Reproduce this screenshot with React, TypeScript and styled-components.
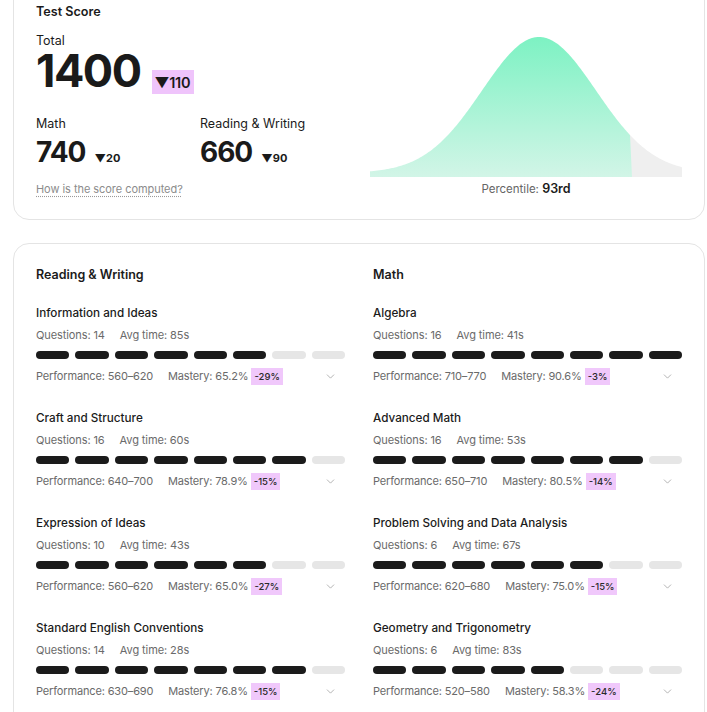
import React from "react";
import styled, { createGlobalStyle } from "styled-components";
import { ChevronDown } from "lucide-react";

const Global = createGlobalStyle`
  html, body { margin: 0; padding: 0; background: #ffffff; }
  body { font-family: Inter, "Noto Sans", Arial, sans-serif; color: #1b1b1b; overflow: hidden; }
  * { box-sizing: border-box; }
`;

const Page = styled.div`
  width: 707px;
  padding: 0 2px 0 13px;
  display: flex;
  flex-direction: column;
  gap: 23px;
`;

const Card = styled.section<{ $clipTop?: boolean }>`
  border: 1px solid #e4e4e4;
  border-radius: 16px;
  background: #fff;
  padding: 22px;
  margin-top: ${(p) => (p.$clipTop ? "-19px" : "0")};
`;

const CardTitle = styled.h2`
  margin: 0;
  font-size: 12.6px;
  line-height: 16px;
  font-weight: 600;
  color: #1b1b1b;
`;

/* ---------- Test score summary ---------- */

const Summary = styled.div`
  display: grid;
  grid-template-columns: 334px 1fr;
`;

const ScoreColumn = styled.div`
  display: flex;
  flex-direction: column;
`;

const Label = styled.div<{ $top: number }>`
  font-size: 12.5px;
  line-height: 16px;
  color: #1b1b1b;
  margin-top: ${(p) => p.$top}px;
`;

const TotalRow = styled.div`
  display: flex;
  align-items: flex-end;
  gap: 11px;
`;

const TotalValue = styled.div`
  font-size: 45px;
  line-height: 44px;
  font-weight: 700;
  letter-spacing: -1.5px;
  color: #1a1a1a;
`;

const DeltaBadge = styled.span`
  display: inline-flex;
  align-items: center;
  height: 24px;
  padding: 0 4px 0 3px;
  margin-bottom: -1px;
  background: #efc4fb;
  font-size: 14.5px;
  font-weight: 600;
  letter-spacing: -0.3px;
  color: #1a1a1a;
`;

const SubScores = styled.div`
  display: grid;
  grid-template-columns: 164px 164px;
  margin-top: 23px;
`;

const SubScore = styled.div`
  display: flex;
  flex-direction: column;
`;

const SubRow = styled.div`
  display: flex;
  align-items: baseline;
  gap: 9px;
  margin-top: 3px;
`;

const SubValue = styled.div`
  font-size: 28px;
  line-height: 34px;
  font-weight: 700;
  letter-spacing: -1px;
  color: #1a1a1a;
`;

const SmallDelta = styled.span`
  font-size: 11px;
  font-weight: 700;
  color: #1a1a1a;
`;

const HelpLink = styled.a`
  margin-top: 13px;
  align-self: flex-start;
  font-size: 11px;
  line-height: 15px;
  letter-spacing: -0.05px;
  color: #8c8c8c;
  text-decoration: underline dotted #9a9a9a;
  text-underline-offset: 3px;
  cursor: help;
`;

const ChartColumn = styled.div`
  display: flex;
  flex-direction: column;
  align-items: center;
  padding-top: 17px;
`;

const ChartSvg = styled.svg`
  display: block;
`;

const Percentile = styled.div`
  margin-top: 4px;
  font-size: 11.5px;
  line-height: 16px;
  color: #666;
  b {
    font-size: 12.5px;
    font-weight: 600;
    color: #1a1a1a;
  }
`;

/* ---------- Domain breakdown ---------- */

const Domains = styled.div`
  display: grid;
  grid-template-columns: 1fr 1fr;
  column-gap: 28px;
  padding-top: 1px;
`;

const Column = styled.div`
  display: flex;
  flex-direction: column;
`;

const ColumnTitle = styled.h3`
  margin: 0 0 22px;
  font-size: 12.5px;
  line-height: 16px;
  font-weight: 600;
  color: #1b1b1b;
`;

const Skill = styled.div`
  display: flex;
  flex-direction: column;
  margin-bottom: 25px;
`;

const SkillName = styled.div`
  font-size: 11.7px;
  line-height: 16px;
  font-weight: 500;
  color: #1b1b1b;
`;

const Meta = styled.div`
  display: flex;
  gap: 15px;
  margin-top: 6px;
  font-size: 11px;
  line-height: 16px;
  letter-spacing: -0.1px;
  color: #6a6a6a;
`;

const Bars = styled.div`
  display: flex;
  gap: 6px;
  margin-top: 8px;
`;

const Bar = styled.span<{ $on: boolean }>`
  flex: 1;
  height: 8px;
  border-radius: 4px;
  background: ${(p) => (p.$on ? "#1b1b1b" : "#e6e6e6")};
`;

const PerfRow = styled.div`
  display: flex;
  align-items: center;
  gap: 15px;
  margin-top: 9px;
  padding-right: 8px;
  font-size: 11px;
  line-height: 17px;
  letter-spacing: -0.15px;
  color: #6a6a6a;
`;

const Mastery = styled.span`
  display: inline-flex;
  align-items: center;
  gap: 3px;
`;

const MiniBadge = styled.span`
  display: inline-block;
  height: 17px;
  padding: 0 3px;
  background: #f0c8fb;
  font-size: 9.5px;
  line-height: 17px;
  font-weight: 500;
  letter-spacing: 0;
  color: #2a2a2a;
`;

const Toggle = styled.span`
  margin-left: auto;
  display: inline-flex;
  color: #a3a3a3;
`;

type SkillData = {
  name: string;
  questions: number;
  time: number;
  filled: number;
  perf: string;
  mastery: string;
  delta: string;
};

const readingWriting: SkillData[] = [
  { name: "Information and Ideas", questions: 14, time: 85, filled: 6, perf: "560–620", mastery: "65.2%", delta: "-29%" },
  { name: "Craft and Structure", questions: 16, time: 60, filled: 7, perf: "640–700", mastery: "78.9%", delta: "-15%" },
  { name: "Expression of Ideas", questions: 10, time: 43, filled: 6, perf: "560–620", mastery: "65.0%", delta: "-27%" },
  { name: "Standard English Conventions", questions: 14, time: 28, filled: 7, perf: "630–690", mastery: "76.8%", delta: "-15%" },
];

const math: SkillData[] = [
  { name: "Algebra", questions: 16, time: 41, filled: 8, perf: "710–770", mastery: "90.6%", delta: "-3%" },
  { name: "Advanced Math", questions: 16, time: 53, filled: 7, perf: "650–710", mastery: "80.5%", delta: "-14%" },
  { name: "Problem Solving and Data Analysis", questions: 6, time: 67, filled: 6, perf: "620–680", mastery: "75.0%", delta: "-15%" },
  { name: "Geometry and Trigonometry", questions: 6, time: 83, filled: 5, perf: "520–580", mastery: "58.3%", delta: "-24%" },
];

function SkillBlock({ s }: { s: SkillData }) {
  return (
    <Skill>
      <SkillName>{s.name}</SkillName>
      <Meta>
        <span>Questions: {s.questions}</span>
        <span>Avg time: {s.time}s</span>
      </Meta>
      <Bars>
        {Array.from({ length: 8 }, (_, i) => (
          <Bar key={i} $on={i < s.filled} />
        ))}
      </Bars>
      <PerfRow>
        <span>Performance: {s.perf}</span>
        <Mastery>
          Mastery: {s.mastery}
          <MiniBadge>{s.delta}</MiniBadge>
        </Mastery>
        <Toggle>
          <ChevronDown size={13} strokeWidth={1.5} />
        </Toggle>
      </PerfRow>
    </Skill>
  );
}

/* Bell curve of the score distribution, split at the student's percentile. */
const W = 312;
const H = 140;
const MU = 169;
const SIGMA = 57;
const SPLIT = 260;

function curveY(x: number) {
  const g = Math.exp(-((x - MU) ** 2) / (2 * SIGMA * SIGMA));
  return H - (4 + 136 * g);
}

function areaPath(from: number, to: number, bottomShift = 0) {
  let d = `M ${from} ${H} `;
  for (let x = from; x <= to; x += 1) d += `L ${x} ${curveY(x).toFixed(2)} `;
  d += `L ${to} ${curveY(to).toFixed(2)} L ${to + bottomShift} ${H} Z`;
  return d;
}

function BellCurve() {
  return (
    <ChartSvg width={W} height={H} viewBox={`0 0 ${W} ${H}`}>
      <defs>
        <linearGradient id="bellFill" x1="0" y1="0" x2="0" y2="1">
          <stop offset="0%" stopColor="#7df2c3" />
          <stop offset="100%" stopColor="#d2f5e7" />
        </linearGradient>
      </defs>
      <path d={areaPath(SPLIT, W)} fill="#efefef" />
      <path d={areaPath(0, SPLIT, 2)} fill="url(#bellFill)" />
    </ChartSvg>
  );
}

export default function App() {
  return (
    <>
      <Global />
      <Page>
        <Card $clipTop>
          <CardTitle>Test Score</CardTitle>
          <Summary>
            <ScoreColumn>
              <Label $top={13}>Total</Label>
              <TotalRow>
                <TotalValue>1400</TotalValue>
                <DeltaBadge>▼110</DeltaBadge>
              </TotalRow>
              <SubScores>
                <SubScore>
                  <Label $top={0}>Math</Label>
                  <SubRow>
                    <SubValue>740</SubValue>
                    <SmallDelta>▼20</SmallDelta>
                  </SubRow>
                </SubScore>
                <SubScore>
                  <Label $top={0}>Reading &amp; Writing</Label>
                  <SubRow>
                    <SubValue>660</SubValue>
                    <SmallDelta>▼90</SmallDelta>
                  </SubRow>
                </SubScore>
              </SubScores>
              <HelpLink>How is the score computed?</HelpLink>
            </ScoreColumn>
            <ChartColumn>
              <BellCurve />
              <Percentile>
                Percentile: <b>93rd</b>
              </Percentile>
            </ChartColumn>
          </Summary>
        </Card>
        <Card>
          <Domains>
            <Column>
              <ColumnTitle>Reading &amp; Writing</ColumnTitle>
              {readingWriting.map((s) => (
                <SkillBlock key={s.name} s={s} />
              ))}
            </Column>
            <Column>
              <ColumnTitle>Math</ColumnTitle>
              {math.map((s) => (
                <SkillBlock key={s.name} s={s} />
              ))}
            </Column>
          </Domains>
        </Card>
      </Page>
    </>
  );
}
